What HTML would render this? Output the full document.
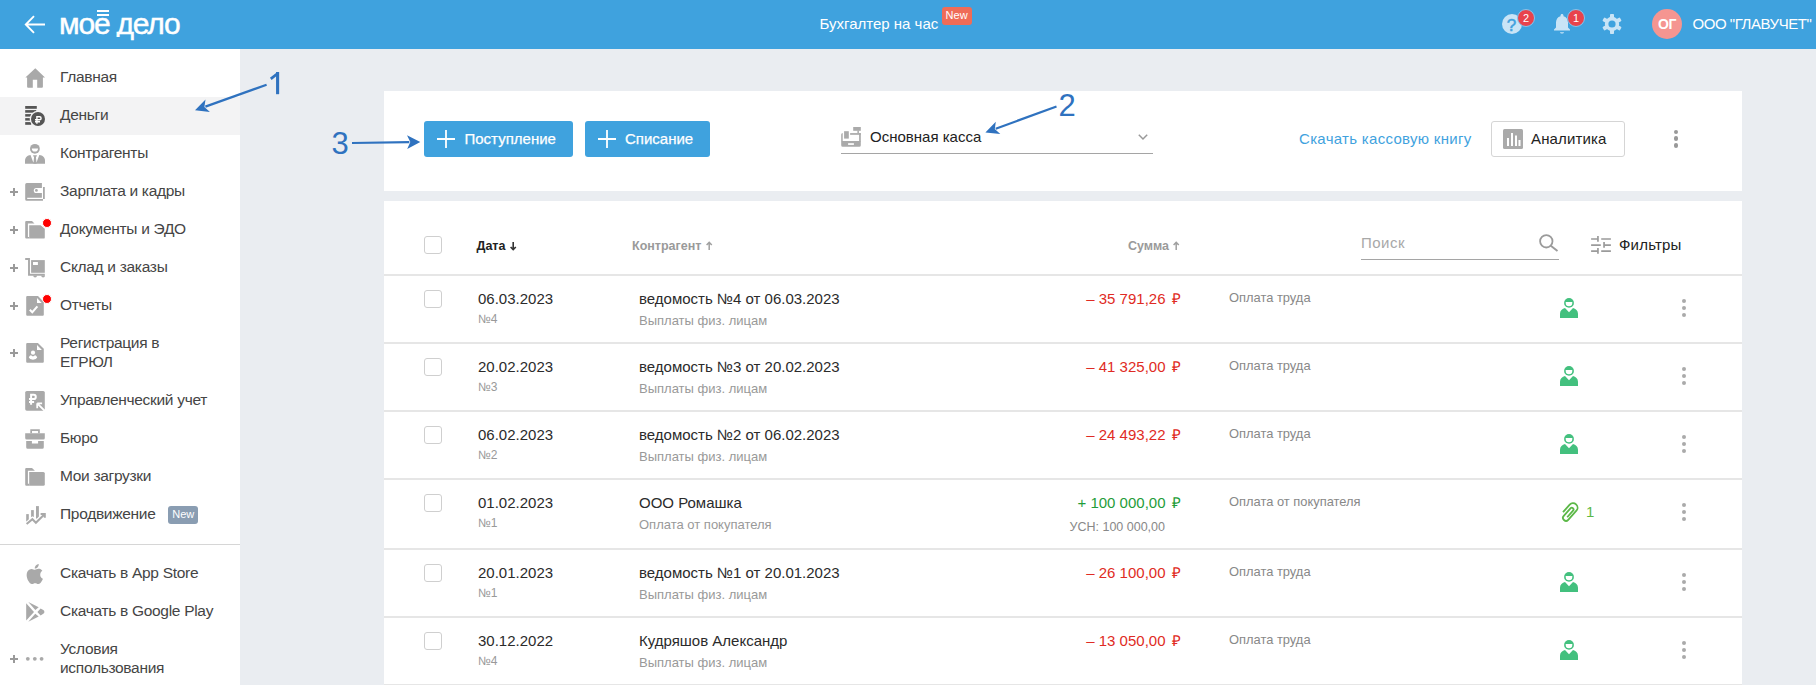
<!DOCTYPE html>
<html><head><meta charset="utf-8">
<style>
*{box-sizing:border-box;margin:0;padding:0}
html,body{width:1816px;height:685px;overflow:hidden;background:#eaedf1;font-family:"Liberation Sans",sans-serif;color:#222;position:relative}
svg{overflow:visible}
</style></head><body>
<div style="position:absolute;left:0;top:0;width:1816px;height:49px;background:#3fa2de"></div>
<svg style="position:absolute;left:24px;top:15px" width="22" height="19" viewBox="0 0 22 19"><path d="M21 9.5H2.2M10 1.2L1.8 9.5L10 17.8" fill="none" stroke="#fff" stroke-width="1.9"/></svg>
<div style="position:absolute;top:8.61px;font-size:30px;line-height:30px;color:#fff;font-weight:normal;white-space:nowrap;left:59px;letter-spacing:-1.2px;-webkit-text-stroke:0.45px #fff;">мое дело</div>
<div style="position:absolute;left:110px;top:37px;width:20px;height:6px;background:#3fa2de"></div>
<div style="position:absolute;left:97px;top:10px;width:12px;height:2px;background:#fff"></div>
<div style="position:absolute;left:97px;top:14px;width:12px;height:2px;background:#fff"></div>
<div style="position:absolute;top:16.30px;font-size:15px;line-height:15px;color:#fff;font-weight:normal;white-space:nowrap;left:819.5px;">Бухгалтер на час</div>
<div style="position:absolute;left:942px;top:7px;width:30px;height:18px;background:#ef6c58;border-radius:3px"></div>
<div style="position:absolute;top:9.69px;font-size:11px;line-height:11px;color:#fff;font-weight:normal;white-space:nowrap;left:945.5px;letter-spacing:0.1px;">New</div>
<div style="position:absolute;left:1502px;top:14px;width:20px;height:20px;border-radius:50%;background:#c9e4f6"></div>
<div style="position:absolute;top:16.61px;font-size:17px;line-height:17px;color:#3fa2de;font-weight:normal;white-space:nowrap;left:1501.5px;width:20px;text-align:center;-webkit-text-stroke:0.5px #3fa2de;">?</div>
<div style="position:absolute;left:1517px;top:9px;width:18px;height:18px;border-radius:50%;background:#e8434c;border:1.5px solid #84c6ee"></div>
<div style="position:absolute;top:12.69px;font-size:11px;line-height:11px;color:#fff;font-weight:normal;white-space:nowrap;left:1517.0px;width:18px;text-align:center;">2</div>
<svg style="position:absolute;left:1550px;top:11px" width="24" height="24" viewBox="0 0 24 24"><path d="M12 22.5c1.1 0 2-.6 2-1.3h-4c0 .7.9 1.3 2 1.3zm6-6v-5c0-3.070-1.640-5.640-4.500-6.320V4.500c0-.830-.670-1.500-1.500-1.500s-1.500.670-1.500 1.500v.680C7.630 5.860 6 8.420 6 11.500v5l-2 2v1h16v-1l-2-2z" fill="#c9e4f6"/></svg>
<div style="position:absolute;left:1567px;top:9px;width:18px;height:18px;border-radius:50%;background:#e8434c;border:1.5px solid #84c6ee"></div>
<div style="position:absolute;top:12.69px;font-size:11px;line-height:11px;color:#fff;font-weight:normal;white-space:nowrap;left:1567.0px;width:18px;text-align:center;">1</div>
<svg style="position:absolute;left:1602px;top:14px" width="20" height="20" viewBox="0 0 20 20"><g fill="#c9e4f6"><circle cx="10" cy="10" r="7.2"/><rect x="8" y="0" width="4" height="20" rx="0.8"/><rect x="8" y="0" width="4" height="20" rx="0.8" transform="rotate(60 10 10)"/><rect x="8" y="0" width="4" height="20" rx="0.8" transform="rotate(120 10 10)"/></g><circle cx="10" cy="10" r="3.6" fill="#3fa2de"/></svg>
<div style="position:absolute;left:1652px;top:9px;width:30px;height:30px;border-radius:50%;background:#f59591"></div>
<div style="position:absolute;top:17.15px;font-size:14px;line-height:14px;color:#fff;font-weight:bold;white-space:nowrap;left:1652.0px;width:30px;text-align:center;letter-spacing:-0.5px;">ОГ</div>
<div style="position:absolute;top:16.30px;font-size:15px;line-height:15px;color:#fff;font-weight:normal;white-space:nowrap;left:1692.5px;letter-spacing:-0.45px;">ООО "ГЛАВУЧЕТ"</div>
<div style="position:absolute;left:0;top:49px;width:240px;height:636px;background:#fff"></div>
<div style="position:absolute;left:0;top:97px;width:240px;height:38px;background:#f3f3f4"></div>
<div style="position:absolute;left:0;top:544px;width:240px;height:1px;background:#d6d6d6"></div>
<svg style="position:absolute;left:25px;top:67px" width="20" height="20" viewBox="0 0 20 20"><path d="M10.3 1.2L0.4 10.5H2.1V19.7a1 1 0 0 0 1 1H7.8V12.7H12.2V20.7H16.9a1 1 0 0 0 1-1V10.5H20Z" fill="#a9a9a9"/></svg>
<div style="position:absolute;top:68.88px;font-size:15.5px;line-height:15.5px;color:#454545;font-weight:normal;white-space:nowrap;left:60px;letter-spacing:-0.3px;">Главная</div>
<svg style="position:absolute;left:25px;top:105px" width="20" height="20" viewBox="0 0 20 20"><g fill="#555"><rect x="0.2" y="1" width="11.6" height="2.8"/><rect x="0.2" y="5.1" width="11" height="2.6"/><rect x="0.2" y="9.1" width="6" height="2.5"/><rect x="0.2" y="13.1" width="5" height="2.5"/><rect x="0.2" y="17.1" width="6" height="2.7"/></g><circle cx="13" cy="14" r="8.3" fill="#f3f3f4"/><circle cx="13" cy="14" r="7" fill="#555"/><path d="M11.9 18.7V11.8H14.6a1.5 1.5 0 0 1 0 3H10M10 16.7H15" fill="none" stroke="#fff" stroke-width="1.4"/></svg>
<div style="position:absolute;top:106.88px;font-size:15.5px;line-height:15.5px;color:#454545;font-weight:normal;white-space:nowrap;left:60px;letter-spacing:-0.3px;">Деньги</div>
<svg style="position:absolute;left:25px;top:143px" width="20" height="20" viewBox="0 0 20 20"><g fill="#a9a9a9"><circle cx="9.9" cy="5.8" r="4.9"/><path d="M0 20.8V17.5C0 14.5 2.5 12.2 5.5 12H14.5C17.5 12.2 20 14.5 20 17.5V20.8Z"/></g><path d="M6.8 5.4H13A3.1 3.1 0 0 1 6.8 5.4Z" fill="#fff"/><path d="M5.5 12H14.3L11.6 19.3H8.2Z" fill="#fff"/><path d="M8.2 12.2H11.8V13.6H8.2ZM9.1 13.6H10.9L11.6 20.8H8.4Z" fill="#a9a9a9"/></svg>
<div style="position:absolute;top:144.88px;font-size:15.5px;line-height:15.5px;color:#454545;font-weight:normal;white-space:nowrap;left:60px;letter-spacing:-0.3px;">Контрагенты</div>
<svg style="position:absolute;left:25px;top:181px" width="20" height="20" viewBox="0 0 20 20"><path d="M1.7 2H16.9V6.9H11.3a2.55 2.55 0 0 0 0 5.1H16.9V16.8H2.2V17.9H19.8V6H18V19.8H1.7a1.5 1.5 0 0 1-1.5-1.5V3.5A1.5 1.5 0 0 1 1.7 2Z" fill="#a9a9a9"/><circle cx="11.4" cy="9.4" r="1.4" fill="#a9a9a9"/></svg>
<div style="position:absolute;top:182.88px;font-size:15.5px;line-height:15.5px;color:#454545;font-weight:normal;white-space:nowrap;left:60px;letter-spacing:-0.3px;">Зарплата и кадры</div>
<div style="position:absolute;left:10px;top:191.1px;width:8px;height:1.8px;background:#9a9a9a"></div>
<div style="position:absolute;left:13.1px;top:188.1px;width:1.8px;height:8px;background:#9a9a9a"></div>
<svg style="position:absolute;left:25px;top:219px" width="20" height="20" viewBox="0 0 20 20"><path d="M1.2 2H7L9.5 4.6H2.9V17.9H4.2V19.6H1.2a1 1 0 0 1-1-1V3a1 1 0 0 1 1-1Z" fill="#a9a9a9"/><path d="M4.2 6.2H15.6L19.8 9.8V18.4a1.2 1.2 0 0 1-1.2 1.2H4.2Z" fill="#a9a9a9"/></svg>
<div style="position:absolute;top:220.88px;font-size:15.5px;line-height:15.5px;color:#454545;font-weight:normal;white-space:nowrap;left:60px;letter-spacing:-0.3px;">Документы и ЭДО</div>
<div style="position:absolute;left:10px;top:229.1px;width:8px;height:1.8px;background:#9a9a9a"></div>
<div style="position:absolute;left:13.1px;top:226.1px;width:1.8px;height:8px;background:#9a9a9a"></div>
<div style="position:absolute;left:41.65px;top:217.65px;width:10.5px;height:10.5px;border-radius:50%;background:#f00;border:1.2px solid #fff"></div>
<svg style="position:absolute;left:25px;top:257px" width="20" height="20" viewBox="0 0 20 20"><path d="M0.2 2H4V17.75H19.8" fill="none" stroke="#a9a9a9" stroke-width="1.9"/><rect x="6.1" y="3.1" width="13.7" height="12.7" fill="#a9a9a9"/><rect x="8" y="5" width="4.9" height="3" fill="#fff"/><path d="M8.2 18.5a1.9 1.9 0 0 0 3.8 0ZM16.2 18.5a1.9 1.9 0 0 0 3.8 0Z" fill="#a9a9a9"/></svg>
<div style="position:absolute;top:258.88px;font-size:15.5px;line-height:15.5px;color:#454545;font-weight:normal;white-space:nowrap;left:60px;letter-spacing:-0.3px;">Склад и заказы</div>
<div style="position:absolute;left:10px;top:267.1px;width:8px;height:1.8px;background:#9a9a9a"></div>
<div style="position:absolute;left:13.1px;top:264.1px;width:1.8px;height:8px;background:#9a9a9a"></div>
<svg style="position:absolute;left:25px;top:295px" width="20" height="20" viewBox="0 0 20 20"><path d="M2.2 1H13L18.8 7V19.8a1 1 0 0 1-1 1H2.2a1 1 0 0 1-1-1V2a1 1 0 0 1 1-1Z" fill="#a9a9a9"/><path d="M12 2.9V7.9H16.7Z" fill="#fff"/><path d="M4.8 14.7L7.3 17.2L12.4 11.3" fill="none" stroke="#fff" stroke-width="2"/></svg>
<div style="position:absolute;top:296.88px;font-size:15.5px;line-height:15.5px;color:#454545;font-weight:normal;white-space:nowrap;left:60px;letter-spacing:-0.3px;">Отчеты</div>
<div style="position:absolute;left:10px;top:305.1px;width:8px;height:1.8px;background:#9a9a9a"></div>
<div style="position:absolute;left:13.1px;top:302.1px;width:1.8px;height:8px;background:#9a9a9a"></div>
<div style="position:absolute;left:41.65px;top:293.65px;width:10.5px;height:10.5px;border-radius:50%;background:#f00;border:1.2px solid #fff"></div>
<svg style="position:absolute;left:25px;top:342px" width="20" height="20" viewBox="0 0 20 20"><path d="M2.2 1H12.9L18.8 6.7V19.8a1 1 0 0 1-1 1H2.2a1 1 0 0 1-1-1V2a1 1 0 0 1 1-1Z" fill="#a9a9a9"/><path d="M12 2.9V8H16.9Z" fill="#fff"/><circle cx="8" cy="10.7" r="2.1" fill="#fff"/><path d="M3.8 15.6C4.2 14.3 5 13.3 5.9 13.2L8 14.6L10.1 13.2C11 13.3 11.8 14.3 12.2 15.6A4.3 2.6 0 0 1 3.8 15.6Z" fill="#fff"/></svg>
<div style="position:absolute;top:335.18px;font-size:15.5px;line-height:15.5px;color:#454545;font-weight:normal;white-space:nowrap;left:60px;letter-spacing:-0.3px;">Регистрация в</div>
<div style="position:absolute;top:354.18px;font-size:15.5px;line-height:15.5px;color:#454545;font-weight:normal;white-space:nowrap;left:60px;letter-spacing:-0.3px;">ЕГРЮЛ</div>
<div style="position:absolute;left:10px;top:352.1px;width:8px;height:1.8px;background:#9a9a9a"></div>
<div style="position:absolute;left:13.1px;top:349.1px;width:1.8px;height:8px;background:#9a9a9a"></div>
<svg style="position:absolute;left:25px;top:390px" width="20" height="20" viewBox="0 0 20 20"><rect x="0.2" y="1" width="19.6" height="19.7" rx="1.6" fill="#a9a9a9"/><path d="M6.1 14.8V4.8H8.7a2.1 2.1 0 0 1 0 4.2H4M4 12.1H9.1" fill="none" stroke="#fff" stroke-width="2"/><path d="M12.2 13.3V18.3M12.2 13.3H17.1M12.2 13.3L19.9 21" fill="none" stroke="#fff" stroke-width="1.8"/></svg>
<div style="position:absolute;top:391.88px;font-size:15.5px;line-height:15.5px;color:#454545;font-weight:normal;white-space:nowrap;left:60px;letter-spacing:-0.3px;">Управленческий учет</div>
<svg style="position:absolute;left:25px;top:428px" width="20" height="20" viewBox="0 0 20 20"><path d="M6.15 5.2V2.05H13.95V5.2" fill="none" stroke="#a9a9a9" stroke-width="1.7"/><path d="M0.2 5.2H19.8V10.1a1.5 1.5 0 0 1-1.5 1.5H1.7a1.5 1.5 0 0 1-1.5-1.5Z" fill="#a9a9a9"/><path d="M1.2 13.1H6.9V15.6H13.1V13.1H18.8V19.2a1.5 1.5 0 0 1-1.5 1.5H2.7a1.5 1.5 0 0 1-1.5-1.5Z" fill="#a9a9a9"/></svg>
<div style="position:absolute;top:429.88px;font-size:15.5px;line-height:15.5px;color:#454545;font-weight:normal;white-space:nowrap;left:60px;letter-spacing:-0.3px;">Бюро</div>
<svg style="position:absolute;left:25px;top:466px" width="20" height="20" viewBox="0 0 20 20"><path d="M1.2 2.1H7L9.9 4.8H2.9V17.7H4.2V19.8H1.2a1 1 0 0 1-1-1V3.1a1 1 0 0 1 1-1Z" fill="#a9a9a9"/><path d="M4.2 6.1H18.3a1.5 1.5 0 0 1 1.5 1.5V18.3a1.5 1.5 0 0 1-1.5 1.5H4.2Z" fill="#a9a9a9"/></svg>
<div style="position:absolute;top:467.88px;font-size:15.5px;line-height:15.5px;color:#454545;font-weight:normal;white-space:nowrap;left:60px;letter-spacing:-0.3px;">Мои загрузки</div>
<svg style="position:absolute;left:25px;top:504px" width="20" height="20" viewBox="0 0 20 20"><g fill="#a9a9a9"><rect x="1.2" y="10.1" width="2.6" height="7.6"/><rect x="6.1" y="6.1" width="2.7" height="6.8"/><rect x="11" y="2.1" width="2.9" height="12.5"/></g><path d="M1.6 20.1L7.4 15.2L10.9 18.8L19 10.7" fill="none" stroke="#fff" stroke-width="4.5"/><path d="M1.6 20.1L7.4 15.2L10.9 18.8L19 10.7M15.6 10.1H19.8V13.7" fill="none" stroke="#a9a9a9" stroke-width="2"/></svg>
<div style="position:absolute;top:505.88px;font-size:15.5px;line-height:15.5px;color:#454545;font-weight:normal;white-space:nowrap;left:60px;letter-spacing:-0.3px;">Продвижение</div>
<svg style="position:absolute;left:25px;top:563px" width="20" height="20" viewBox="0 0 20 20"><path transform="translate(-2.2,-1)" d="M18.71 19.5c-.83 1.24-1.71 2.45-3.05 2.47-1.34.03-1.77-.79-3.29-.79-1.53 0-2 .77-3.27.82-1.310.05-2.3-1.32-3.14-2.53C4.25 17 2.94 12.45 4.7 9.39c.87-1.52 2.43-2.48 4.12-2.51 1.28-.02 2.5.87 3.29.87.78 0 2.26-1.07 3.81-.91.65.03 2.47.26 3.640 1.98-.09.06-2.17 1.28-2.15 3.81.03 3.02 2.65 4.03 2.68 4.04-.03.07-.42 1.44-1.38 2.83M13 3.5c.73-.83 1.94-1.46 2.94-1.5.13 1.17-.34 2.35-1.04 3.19-.69.85-1.830 1.51-2.95 1.42-.15-1.15.41-2.35 1.05-3.11z" fill="#a9a9a9"/></svg>
<div style="position:absolute;top:564.88px;font-size:15.5px;line-height:15.5px;color:#454545;font-weight:normal;white-space:nowrap;left:60px;letter-spacing:-0.3px;">Скачать в App Store</div>
<svg style="position:absolute;left:25px;top:601px" width="20" height="20" viewBox="0 0 20 20"><g fill="#a9a9a9"><path d="M1.2 2.3L9 10.9L1.2 19.4Z"/><path d="M3.3 1L13.7 6.3L10.3 9.1Z"/><path d="M3.3 20.8L13.7 15.5L10.3 12.7Z"/><path d="M12.4 10.9L15.6 7.4L18.3 9a2.2 2.2 0 0 1 0 3.8L15.6 14.4Z"/></g></svg>
<div style="position:absolute;top:602.88px;font-size:15.5px;line-height:15.5px;color:#454545;font-weight:normal;white-space:nowrap;left:60px;letter-spacing:-0.3px;">Скачать в Google Play</div>
<svg style="position:absolute;left:25px;top:649px" width="20" height="20" viewBox="0 0 20 20"><g fill="#a9a9a9"><circle cx="2.8" cy="9.8" r="1.9"/><circle cx="9.8" cy="9.8" r="1.9"/><circle cx="16.6" cy="9.8" r="1.9"/></g></svg>
<div style="position:absolute;top:640.98px;font-size:15.5px;line-height:15.5px;color:#454545;font-weight:normal;white-space:nowrap;left:60px;letter-spacing:-0.3px;">Условия</div>
<div style="position:absolute;top:659.98px;font-size:15.5px;line-height:15.5px;color:#454545;font-weight:normal;white-space:nowrap;left:60px;letter-spacing:-0.3px;">использования</div>
<div style="position:absolute;left:10px;top:658.0px;width:8px;height:1.8px;background:#9a9a9a"></div>
<div style="position:absolute;left:13.1px;top:655.0px;width:1.8px;height:8px;background:#9a9a9a"></div>
<div style="position:absolute;left:168px;top:506px;width:30px;height:18px;background:#8a9db2;border-radius:3px"></div>
<div style="position:absolute;top:508.69px;font-size:11px;line-height:11px;color:#fff;font-weight:normal;white-space:nowrap;left:172.3px;">New</div>
<div style="position:absolute;left:384px;top:91px;width:1358px;height:100px;background:#fff"></div>
<div style="position:absolute;left:384px;top:201px;width:1358px;height:484px;background:#fff"></div>
<div style="position:absolute;left:424px;top:121px;width:149px;height:36px;background:#3fa2de;border-radius:3px"></div>
<svg style="position:absolute;left:437px;top:130px" width="18" height="18" viewBox="0 0 18 18"><path d="M9 0V18M0 9H18" stroke="#fff" stroke-width="1.8"/></svg>
<div style="position:absolute;top:131.30px;font-size:15px;line-height:15px;color:#fff;font-weight:normal;white-space:nowrap;left:464.5px;-webkit-text-stroke:0.25px #fff;">Поступление</div>
<div style="position:absolute;left:585px;top:121px;width:125px;height:36px;background:#3fa2de;border-radius:3px"></div>
<svg style="position:absolute;left:598px;top:130px" width="18" height="18" viewBox="0 0 18 18"><path d="M9 0V18M0 9H18" stroke="#fff" stroke-width="1.8"/></svg>
<div style="position:absolute;top:131.30px;font-size:15px;line-height:15px;color:#fff;font-weight:normal;white-space:nowrap;left:625px;-webkit-text-stroke:0.25px #fff;">Списание</div>
<svg style="position:absolute;left:841px;top:127px" width="20" height="20" viewBox="0 0 20 20"><g fill="#aaa"><rect x="12.2" y="0" width="7.6" height="3.8"/><rect x="16.4" y="3.5" width="1.5" height="3"/><path d="M1.7 6.1V14.2H0.2V7.6A1.5 1.5 0 0 1 1.7 6.1Z"/><rect x="9.1" y="6.1" width="10.7" height="1.7"/><rect x="18.1" y="6.1" width="1.7" height="8.5"/><path d="M0.2 14.1H19.8V18.3a1.5 1.5 0 0 1-1.5 1.5H1.7a1.5 1.5 0 0 1-1.5-1.5Z"/><rect x="3.1" y="4.2" width="4.7" height="7.4"/></g><rect x="7.1" y="16.2" width="5.8" height="1.7" fill="#fff"/></svg>
<div style="position:absolute;top:129.30px;font-size:15px;line-height:15px;color:#222;font-weight:normal;white-space:nowrap;left:870px;">Основная касса</div>
<svg style="position:absolute;left:1138px;top:134px" width="10" height="6" viewBox="0 0 10 6"><path d="M0.8 0.8L5 5L9.2 0.8" fill="none" stroke="#999" stroke-width="1.5"/></svg>
<div style="position:absolute;left:841px;top:153px;width:312px;height:1px;background:#a5a5a5"></div>
<div style="position:absolute;top:131.30px;font-size:15px;line-height:15px;color:#3fa2de;font-weight:normal;white-space:nowrap;left:1299px;letter-spacing:0.3px;">Скачать кассовую книгу</div>
<div style="position:absolute;left:1491px;top:121px;width:134px;height:36px;border:1px solid #d5d5d5;border-radius:3px;background:#fff"></div>
<svg style="position:absolute;left:1503px;top:129px" width="20" height="20" viewBox="0 0 20 20"><rect x="0" y="0" width="20" height="20" rx="1.5" fill="#aaa"/><g fill="#fff"><rect x="4" y="9" width="2" height="8"/><rect x="8" y="4" width="2" height="13"/><rect x="12" y="6.5" width="2" height="10.5"/><rect x="15.5" y="11" width="2" height="6"/></g></svg>
<div style="position:absolute;top:131.30px;font-size:15px;line-height:15px;color:#222;font-weight:normal;white-space:nowrap;left:1531px;letter-spacing:0.15px;">Аналитика</div>
<div style="position:absolute;left:1673.7px;top:129.6px;width:4.6px;height:4.6px;border-radius:50%;background:#999"></div>
<div style="position:absolute;left:1673.7px;top:136.3px;width:4.6px;height:4.6px;border-radius:50%;background:#999"></div>
<div style="position:absolute;left:1673.7px;top:143px;width:4.6px;height:4.6px;border-radius:50%;background:#999"></div>
<div style="position:absolute;left:424px;top:236px;width:18px;height:18px;border:1px solid #cfcfcf;border-radius:3px;background:#fff"></div>
<div style="position:absolute;top:240.42px;font-size:12.5px;line-height:12.5px;color:#222;font-weight:bold;white-space:nowrap;left:476.5px;">Дата</div>
<svg style="position:absolute;left:509.6px;top:242px" width="7" height="9" viewBox="0 0 7 9"><path d="M3.2 0V7.6M0.6 5L3.2 7.6L5.8 5" fill="none" stroke="#333" stroke-width="1.6"/></svg>
<div style="position:absolute;top:240.42px;font-size:12.5px;line-height:12.5px;color:#9a9a9a;font-weight:bold;white-space:nowrap;left:632px;">Контрагент</div>
<svg style="position:absolute;left:705.6px;top:242.3px" width="7" height="9" viewBox="0 0 7 9"><path d="M3.2 8V0.4M0.6 3L3.2 0.4L5.8 3" fill="none" stroke="#a0a0a0" stroke-width="1.5"/></svg>
<div style="position:absolute;top:240.42px;font-size:12.5px;line-height:12.5px;color:#9a9a9a;font-weight:bold;white-space:nowrap;right:647px;text-align:right;">Сумма</div>
<svg style="position:absolute;left:1173px;top:242px" width="7" height="9" viewBox="0 0 7 9"><path d="M3.2 8V0.4M0.6 3L3.2 0.4L5.8 3" fill="none" stroke="#a0a0a0" stroke-width="1.5"/></svg>
<div style="position:absolute;top:234.80px;font-size:15px;line-height:15px;color:#a8a8a8;font-weight:normal;white-space:nowrap;left:1361px;letter-spacing:0.5px;">Поиск</div>
<div style="position:absolute;left:1361px;top:259px;width:198px;height:1px;background:#a5a5a5"></div>
<svg style="position:absolute;left:1539px;top:234px" width="20" height="18" viewBox="0 0 20 18"><circle cx="7.3" cy="7.3" r="6.2" fill="none" stroke="#9b9b9b" stroke-width="1.8"/><path d="M11.8 11.8L18.5 17" stroke="#9b9b9b" stroke-width="2"/></svg>
<svg style="position:absolute;left:1591px;top:236px" width="20" height="18" viewBox="0 0 20 18"><g stroke="#9b9b9b" stroke-width="1.7" fill="none"><path d="M0.1 3H7M10.2 3H19.9M0.1 9.05H9.8M12.3 9.05H19.9M0.1 15.05H7M10.2 15.05H19.9M6.95 0V5.7M13.05 6.1V11.8M6.95 12.1V17.8"/></g></svg>
<div style="position:absolute;top:237.30px;font-size:15px;line-height:15px;color:#222;font-weight:normal;white-space:nowrap;left:1619px;letter-spacing:0.2px;">Фильтры</div>
<div style="position:absolute;left:384px;top:274px;width:1358px;height:2px;background:#e6e6e6"></div>
<div style="position:absolute;left:424px;top:290px;width:18px;height:18px;border:1px solid #cfcfcf;border-radius:3px;background:#fff"></div>
<div style="position:absolute;top:291.30px;font-size:15px;line-height:15px;color:#2b2b2b;font-weight:normal;white-space:nowrap;left:478px;">06.03.2023</div>
<div style="position:absolute;top:312.84px;font-size:12px;line-height:12px;color:#999;font-weight:normal;white-space:nowrap;left:478px;">№4</div>
<div style="position:absolute;top:291.30px;font-size:15px;line-height:15px;color:#2b2b2b;font-weight:normal;white-space:nowrap;left:639px;">ведомость №4 от 06.03.2023</div>
<div style="position:absolute;top:314.00px;font-size:13px;line-height:13px;color:#999;font-weight:normal;white-space:nowrap;left:639px;">Выплаты физ. лицам</div>
<div style="position:absolute;top:291.30px;font-size:15px;line-height:15px;color:#df2b24;font-weight:normal;white-space:nowrap;right:650.5px;text-align:right;">– 35 791,26</div>
<div style="position:absolute;top:291.30px;font-size:15px;line-height:15px;color:#df2b24;font-weight:normal;white-space:nowrap;left:1172.3px;">₽</div>
<div style="position:absolute;top:291.58px;font-size:12.9px;line-height:12.9px;color:#888;font-weight:normal;white-space:nowrap;left:1229px;">Оплата труда</div>
<svg style="position:absolute;left:1560px;top:298px" width="18" height="20" viewBox="0 0 18 20"><circle cx="9" cy="4.9" r="4.9" fill="#43c07e"/><path d="M5.7 4.1H12.3V5A3.3 3.3 0 0 1 5.7 5z" fill="#fff"/><path d="M0 20V15.7C0 12.6 2.3 10.7 5 10L9 14.2L13 10C15.7 10.7 18 12.6 18 15.7V20Z" fill="#43c07e"/></svg>
<div style="position:absolute;left:1681.5px;top:298.8px;width:4.4px;height:4.4px;border-radius:50%;background:#aaa"></div>
<div style="position:absolute;left:1681.5px;top:305.8px;width:4.4px;height:4.4px;border-radius:50%;background:#aaa"></div>
<div style="position:absolute;left:1681.5px;top:312.8px;width:4.4px;height:4.4px;border-radius:50%;background:#aaa"></div>
<div style="position:absolute;left:384px;top:342px;width:1358px;height:2px;background:#e6e6e6"></div>
<div style="position:absolute;left:424px;top:358px;width:18px;height:18px;border:1px solid #cfcfcf;border-radius:3px;background:#fff"></div>
<div style="position:absolute;top:359.30px;font-size:15px;line-height:15px;color:#2b2b2b;font-weight:normal;white-space:nowrap;left:478px;">20.02.2023</div>
<div style="position:absolute;top:380.84px;font-size:12px;line-height:12px;color:#999;font-weight:normal;white-space:nowrap;left:478px;">№3</div>
<div style="position:absolute;top:359.30px;font-size:15px;line-height:15px;color:#2b2b2b;font-weight:normal;white-space:nowrap;left:639px;">ведомость №3 от 20.02.2023</div>
<div style="position:absolute;top:382.00px;font-size:13px;line-height:13px;color:#999;font-weight:normal;white-space:nowrap;left:639px;">Выплаты физ. лицам</div>
<div style="position:absolute;top:359.30px;font-size:15px;line-height:15px;color:#df2b24;font-weight:normal;white-space:nowrap;right:650.5px;text-align:right;">– 41 325,00</div>
<div style="position:absolute;top:359.30px;font-size:15px;line-height:15px;color:#df2b24;font-weight:normal;white-space:nowrap;left:1172.3px;">₽</div>
<div style="position:absolute;top:359.58px;font-size:12.9px;line-height:12.9px;color:#888;font-weight:normal;white-space:nowrap;left:1229px;">Оплата труда</div>
<svg style="position:absolute;left:1560px;top:366px" width="18" height="20" viewBox="0 0 18 20"><circle cx="9" cy="4.9" r="4.9" fill="#43c07e"/><path d="M5.7 4.1H12.3V5A3.3 3.3 0 0 1 5.7 5z" fill="#fff"/><path d="M0 20V15.7C0 12.6 2.3 10.7 5 10L9 14.2L13 10C15.7 10.7 18 12.6 18 15.7V20Z" fill="#43c07e"/></svg>
<div style="position:absolute;left:1681.5px;top:366.8px;width:4.4px;height:4.4px;border-radius:50%;background:#aaa"></div>
<div style="position:absolute;left:1681.5px;top:373.8px;width:4.4px;height:4.4px;border-radius:50%;background:#aaa"></div>
<div style="position:absolute;left:1681.5px;top:380.8px;width:4.4px;height:4.4px;border-radius:50%;background:#aaa"></div>
<div style="position:absolute;left:384px;top:410px;width:1358px;height:2px;background:#e6e6e6"></div>
<div style="position:absolute;left:424px;top:426px;width:18px;height:18px;border:1px solid #cfcfcf;border-radius:3px;background:#fff"></div>
<div style="position:absolute;top:427.30px;font-size:15px;line-height:15px;color:#2b2b2b;font-weight:normal;white-space:nowrap;left:478px;">06.02.2023</div>
<div style="position:absolute;top:448.84px;font-size:12px;line-height:12px;color:#999;font-weight:normal;white-space:nowrap;left:478px;">№2</div>
<div style="position:absolute;top:427.30px;font-size:15px;line-height:15px;color:#2b2b2b;font-weight:normal;white-space:nowrap;left:639px;">ведомость №2 от 06.02.2023</div>
<div style="position:absolute;top:450.00px;font-size:13px;line-height:13px;color:#999;font-weight:normal;white-space:nowrap;left:639px;">Выплаты физ. лицам</div>
<div style="position:absolute;top:427.30px;font-size:15px;line-height:15px;color:#df2b24;font-weight:normal;white-space:nowrap;right:650.5px;text-align:right;">– 24 493,22</div>
<div style="position:absolute;top:427.30px;font-size:15px;line-height:15px;color:#df2b24;font-weight:normal;white-space:nowrap;left:1172.3px;">₽</div>
<div style="position:absolute;top:427.58px;font-size:12.9px;line-height:12.9px;color:#888;font-weight:normal;white-space:nowrap;left:1229px;">Оплата труда</div>
<svg style="position:absolute;left:1560px;top:434px" width="18" height="20" viewBox="0 0 18 20"><circle cx="9" cy="4.9" r="4.9" fill="#43c07e"/><path d="M5.7 4.1H12.3V5A3.3 3.3 0 0 1 5.7 5z" fill="#fff"/><path d="M0 20V15.7C0 12.6 2.3 10.7 5 10L9 14.2L13 10C15.7 10.7 18 12.6 18 15.7V20Z" fill="#43c07e"/></svg>
<div style="position:absolute;left:1681.5px;top:434.8px;width:4.4px;height:4.4px;border-radius:50%;background:#aaa"></div>
<div style="position:absolute;left:1681.5px;top:441.8px;width:4.4px;height:4.4px;border-radius:50%;background:#aaa"></div>
<div style="position:absolute;left:1681.5px;top:448.8px;width:4.4px;height:4.4px;border-radius:50%;background:#aaa"></div>
<div style="position:absolute;left:384px;top:478px;width:1358px;height:2px;background:#e6e6e6"></div>
<div style="position:absolute;left:424px;top:494px;width:18px;height:18px;border:1px solid #cfcfcf;border-radius:3px;background:#fff"></div>
<div style="position:absolute;top:495.30px;font-size:15px;line-height:15px;color:#2b2b2b;font-weight:normal;white-space:nowrap;left:478px;">01.02.2023</div>
<div style="position:absolute;top:516.84px;font-size:12px;line-height:12px;color:#999;font-weight:normal;white-space:nowrap;left:478px;">№1</div>
<div style="position:absolute;top:495.30px;font-size:15px;line-height:15px;color:#2b2b2b;font-weight:normal;white-space:nowrap;left:639px;">ООО Ромашка</div>
<div style="position:absolute;top:518.00px;font-size:13px;line-height:13px;color:#999;font-weight:normal;white-space:nowrap;left:639px;">Оплата от покупателя</div>
<div style="position:absolute;top:495.30px;font-size:15px;line-height:15px;color:#1f9d3a;font-weight:normal;white-space:nowrap;right:650.5px;text-align:right;">+ 100 000,00</div>
<div style="position:absolute;top:495.30px;font-size:15px;line-height:15px;color:#1f9d3a;font-weight:normal;white-space:nowrap;left:1172.3px;">₽</div>
<div style="position:absolute;top:521.42px;font-size:12.5px;line-height:12.5px;color:#888;font-weight:normal;white-space:nowrap;right:651px;text-align:right;">УСН: 100 000,00</div>
<div style="position:absolute;top:495.58px;font-size:12.9px;line-height:12.9px;color:#888;font-weight:normal;white-space:nowrap;left:1229px;">Оплата от покупателя</div>
<svg style="position:absolute;left:1556px;top:498px" width="26" height="26" viewBox="0 0 26 26"><g transform="translate(13.1 14.1) rotate(42) translate(0 0.3)"><path d="M-4.5 3.8V-6.2A4.5 4.5 0 0 1 4.5 -6.2V6A3 3 0 0 1 -1.5 6V-4A1.75 1.75 0 0 1 2 -4V4.8" fill="none" stroke="#5bb847" stroke-width="1.8"/></g></svg>
<div style="position:absolute;top:504.30px;font-size:15px;line-height:15px;color:#5bb847;font-weight:normal;white-space:nowrap;left:1586px;">1</div>
<div style="position:absolute;left:1681.5px;top:502.8px;width:4.4px;height:4.4px;border-radius:50%;background:#aaa"></div>
<div style="position:absolute;left:1681.5px;top:509.8px;width:4.4px;height:4.4px;border-radius:50%;background:#aaa"></div>
<div style="position:absolute;left:1681.5px;top:516.8px;width:4.4px;height:4.4px;border-radius:50%;background:#aaa"></div>
<div style="position:absolute;left:384px;top:548px;width:1358px;height:2px;background:#e6e6e6"></div>
<div style="position:absolute;left:424px;top:564px;width:18px;height:18px;border:1px solid #cfcfcf;border-radius:3px;background:#fff"></div>
<div style="position:absolute;top:565.30px;font-size:15px;line-height:15px;color:#2b2b2b;font-weight:normal;white-space:nowrap;left:478px;">20.01.2023</div>
<div style="position:absolute;top:586.84px;font-size:12px;line-height:12px;color:#999;font-weight:normal;white-space:nowrap;left:478px;">№1</div>
<div style="position:absolute;top:565.30px;font-size:15px;line-height:15px;color:#2b2b2b;font-weight:normal;white-space:nowrap;left:639px;">ведомость №1 от 20.01.2023</div>
<div style="position:absolute;top:588.00px;font-size:13px;line-height:13px;color:#999;font-weight:normal;white-space:nowrap;left:639px;">Выплаты физ. лицам</div>
<div style="position:absolute;top:565.30px;font-size:15px;line-height:15px;color:#df2b24;font-weight:normal;white-space:nowrap;right:650.5px;text-align:right;">– 26 100,00</div>
<div style="position:absolute;top:565.30px;font-size:15px;line-height:15px;color:#df2b24;font-weight:normal;white-space:nowrap;left:1172.3px;">₽</div>
<div style="position:absolute;top:565.58px;font-size:12.9px;line-height:12.9px;color:#888;font-weight:normal;white-space:nowrap;left:1229px;">Оплата труда</div>
<svg style="position:absolute;left:1560px;top:572px" width="18" height="20" viewBox="0 0 18 20"><circle cx="9" cy="4.9" r="4.9" fill="#43c07e"/><path d="M5.7 4.1H12.3V5A3.3 3.3 0 0 1 5.7 5z" fill="#fff"/><path d="M0 20V15.7C0 12.6 2.3 10.7 5 10L9 14.2L13 10C15.7 10.7 18 12.6 18 15.7V20Z" fill="#43c07e"/></svg>
<div style="position:absolute;left:1681.5px;top:572.8px;width:4.4px;height:4.4px;border-radius:50%;background:#aaa"></div>
<div style="position:absolute;left:1681.5px;top:579.8px;width:4.4px;height:4.4px;border-radius:50%;background:#aaa"></div>
<div style="position:absolute;left:1681.5px;top:586.8px;width:4.4px;height:4.4px;border-radius:50%;background:#aaa"></div>
<div style="position:absolute;left:384px;top:616px;width:1358px;height:2px;background:#e6e6e6"></div>
<div style="position:absolute;left:424px;top:632px;width:18px;height:18px;border:1px solid #cfcfcf;border-radius:3px;background:#fff"></div>
<div style="position:absolute;top:633.30px;font-size:15px;line-height:15px;color:#2b2b2b;font-weight:normal;white-space:nowrap;left:478px;">30.12.2022</div>
<div style="position:absolute;top:654.84px;font-size:12px;line-height:12px;color:#999;font-weight:normal;white-space:nowrap;left:478px;">№4</div>
<div style="position:absolute;top:633.30px;font-size:15px;line-height:15px;color:#2b2b2b;font-weight:normal;white-space:nowrap;left:639px;">Кудряшов Александр</div>
<div style="position:absolute;top:656.00px;font-size:13px;line-height:13px;color:#999;font-weight:normal;white-space:nowrap;left:639px;">Выплаты физ. лицам</div>
<div style="position:absolute;top:633.30px;font-size:15px;line-height:15px;color:#df2b24;font-weight:normal;white-space:nowrap;right:650.5px;text-align:right;">– 13 050,00</div>
<div style="position:absolute;top:633.30px;font-size:15px;line-height:15px;color:#df2b24;font-weight:normal;white-space:nowrap;left:1172.3px;">₽</div>
<div style="position:absolute;top:633.58px;font-size:12.9px;line-height:12.9px;color:#888;font-weight:normal;white-space:nowrap;left:1229px;">Оплата труда</div>
<svg style="position:absolute;left:1560px;top:640px" width="18" height="20" viewBox="0 0 18 20"><circle cx="9" cy="4.9" r="4.9" fill="#43c07e"/><path d="M5.7 4.1H12.3V5A3.3 3.3 0 0 1 5.7 5z" fill="#fff"/><path d="M0 20V15.7C0 12.6 2.3 10.7 5 10L9 14.2L13 10C15.7 10.7 18 12.6 18 15.7V20Z" fill="#43c07e"/></svg>
<div style="position:absolute;left:1681.5px;top:640.8px;width:4.4px;height:4.4px;border-radius:50%;background:#aaa"></div>
<div style="position:absolute;left:1681.5px;top:647.8px;width:4.4px;height:4.4px;border-radius:50%;background:#aaa"></div>
<div style="position:absolute;left:1681.5px;top:654.8px;width:4.4px;height:4.4px;border-radius:50%;background:#aaa"></div>
<div style="position:absolute;left:384px;top:684px;width:1358px;height:2px;background:#e6e6e6"></div>
<svg style="position:absolute;left:0;top:0" width="1816" height="685"><path d="M277.6 72V94.2" stroke="#2f72bf" stroke-width="3.1"/><path d="M278.2 73L270.8 78.8" stroke="#2f72bf" stroke-width="2.8"/><path d="M266.6 84.7L205.4 106.6" stroke="#2f72bf" stroke-width="2.2"/><path d="M195.0 110.3L205.5 99.5L204.4 106.9L209.9 112.0Z" fill="#2f72bf"/><path d="M1056.5 106.5L995.7 128.7" stroke="#2f72bf" stroke-width="2.2"/><path d="M985.4 132.5L995.8 121.7L994.8 129.1L1000.3 134.1Z" fill="#2f72bf"/><path d="M352.0 143.0L409.3 142.2" stroke="#2f72bf" stroke-width="2.2"/><path d="M420.3 142.0L407.2 149.1L410.3 142.1L407.0 135.3Z" fill="#2f72bf"/><g font-family="Liberation Sans" font-size="31" fill="#2f72bf"><text x="1058.5" y="116">2</text><text x="331.5" y="154">3</text></g></svg>
</body></html>
